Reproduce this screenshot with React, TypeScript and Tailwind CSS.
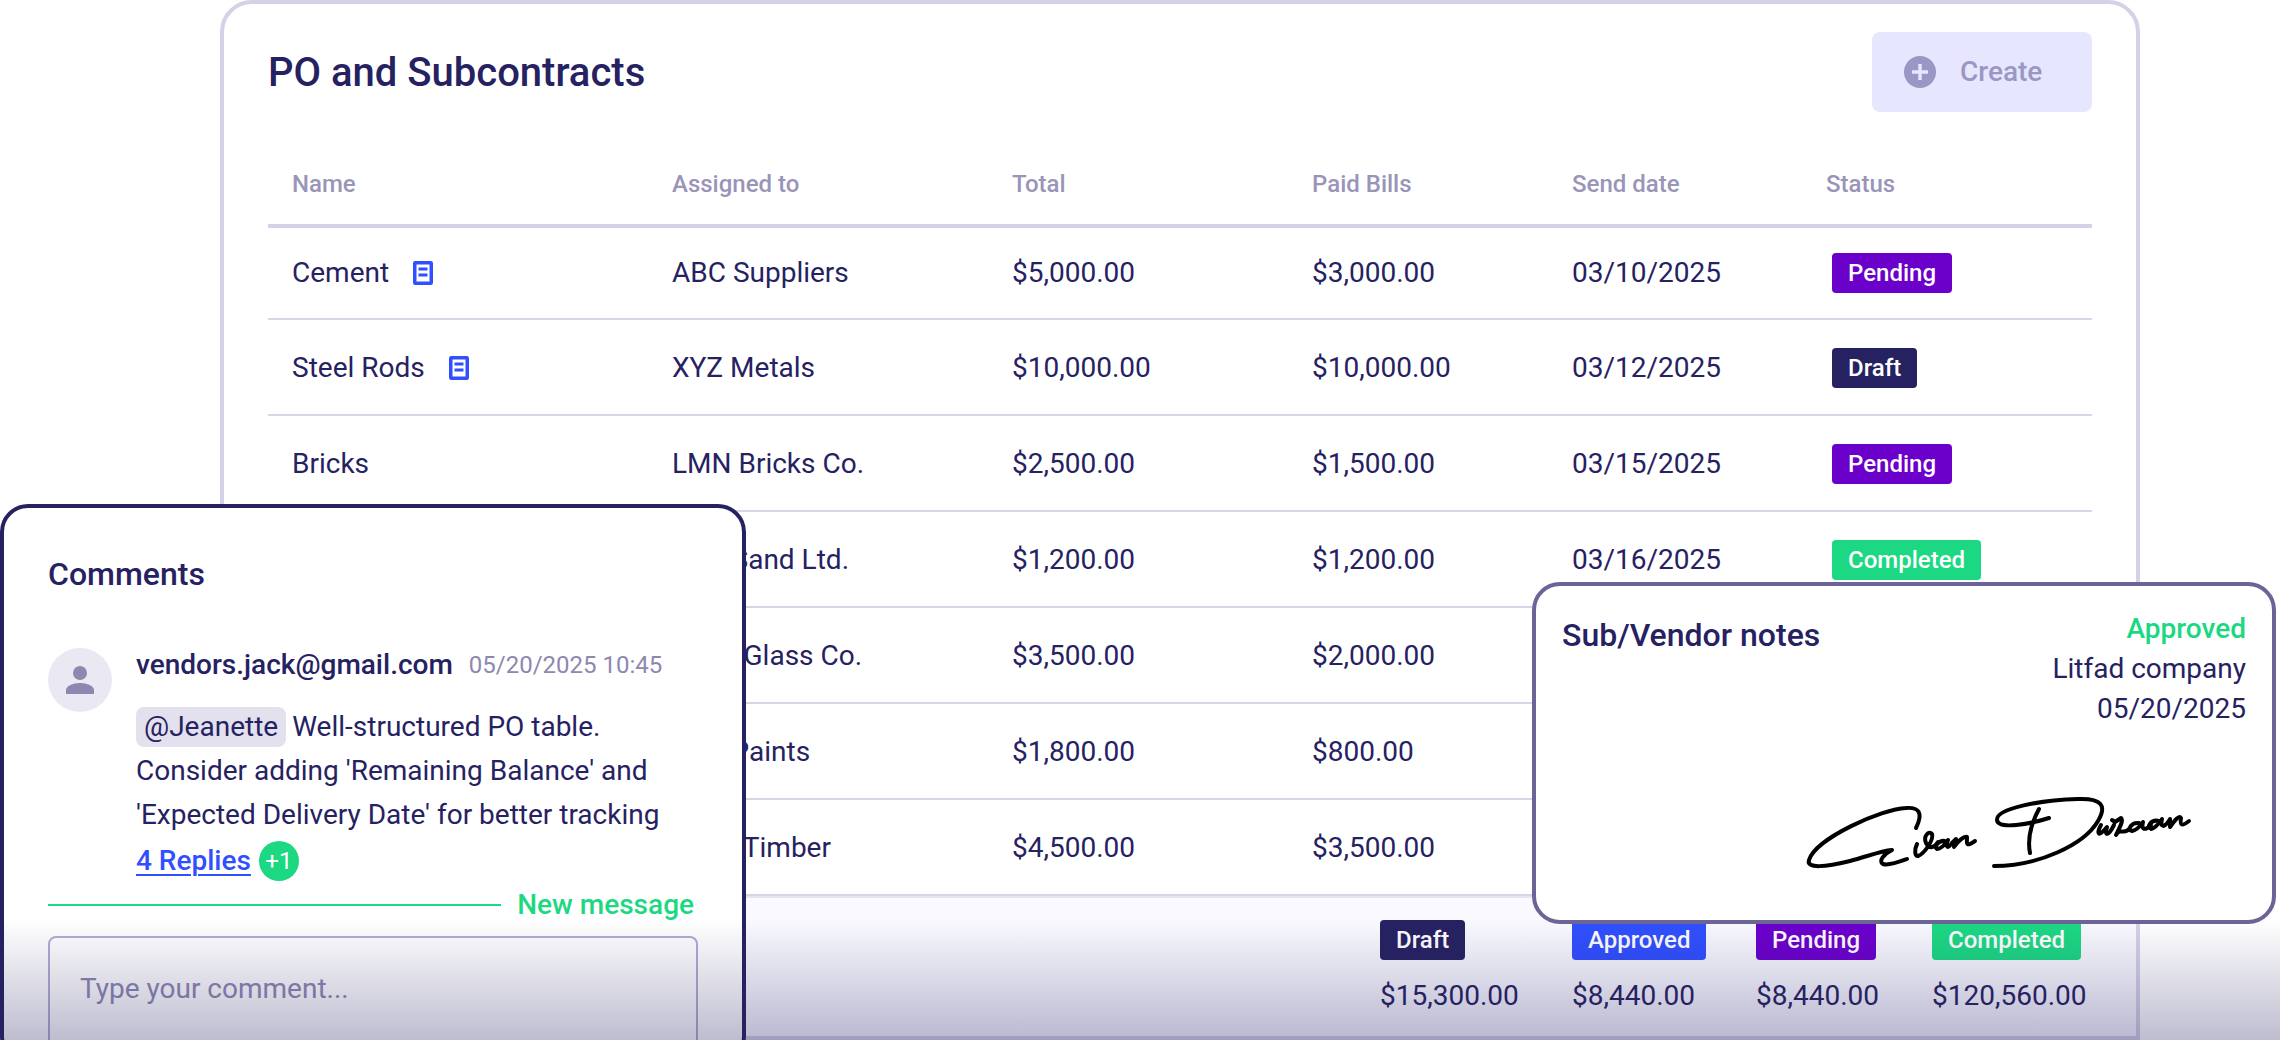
import React from 'react';

type Status = 'Pending' | 'Draft' | 'Completed' | 'Approved';

interface Row {
  name?: string;
  hasNote?: boolean;
  assignedTo: string;
  total: string;
  paid: string;
  date?: string;
  status?: Status;
}

const rows: Row[] = [
  { name: 'Cement', hasNote: true, assignedTo: 'ABC Suppliers', total: '$5,000.00', paid: '$3,000.00', date: '03/10/2025', status: 'Pending' },
  { name: 'Steel Rods', hasNote: true, assignedTo: 'XYZ Metals', total: '$10,000.00', paid: '$10,000.00', date: '03/12/2025', status: 'Draft' },
  { name: 'Bricks', assignedTo: 'LMN Bricks Co.', total: '$2,500.00', paid: '$1,500.00', date: '03/15/2025', status: 'Pending' },
  { assignedTo: 'Fine Sand Ltd.', total: '$1,200.00', paid: '$1,200.00', date: '03/16/2025', status: 'Completed' },
  { assignedTo: 'Clear Glass Co.', total: '$3,500.00', paid: '$2,000.00' },
  { assignedTo: 'Fine Paints', total: '$1,800.00', paid: '$800.00' },
  { assignedTo: 'Delta Timber', total: '$4,500.00', paid: '$3,500.00' },
];

const totals: { status: Status; amount: string }[] = [
  { status: 'Draft', amount: '$15,300.00' },
  { status: 'Approved', amount: '$8,440.00' },
  { status: 'Pending', amount: '$8,440.00' },
  { status: 'Completed', amount: '$120,560.00' },
];

const statusColors: Record<Status, string> = {
  Pending: 'bg-[#6b00cb]',
  Draft: 'bg-[#262262]',
  Completed: 'bg-[#1cd882]',
  Approved: 'bg-[#304ffe]',
};

const Badge: React.FC<{ status: Status }> = ({ status }) => (
  <span className={`inline-flex h-10 items-center rounded px-4 text-2xl font-medium text-white ${statusColors[status]}`}>
    {status}
  </span>
);

const NoteIcon: React.FC = () => (
  <svg width="20" height="24" viewBox="0 0 20 24" fill="none" className="shrink-0 text-[#304ffe]">
    <rect x="1.75" y="1.75" width="16.5" height="20.5" rx="0.5" stroke="currentColor" strokeWidth="3.5" />
    <path d="M5.5 8h9M5.5 14h9" stroke="currentColor" strokeWidth="2.8" />
  </svg>
);

const PlusIcon: React.FC = () => (
  <svg width="32" height="32" viewBox="0 0 32 32" className="shrink-0">
    <circle cx="16" cy="16" r="16" fill="#9a97c4" />
    <path d="M16 8v16M8 16h16" stroke="#e6e6fe" strokeWidth="3.4" />
  </svg>
);

const Signature: React.FC = () => (
  <svg viewBox="0 0 440 120" className="h-[120px] w-[440px]" fill="none" stroke="#000" strokeWidth="4" strokeLinecap="round" strokeLinejoin="round">
    <path d="M136 58C144 42 138 37 126 38C102 39 36 68 29 90C26 99 46 97 70 91C86 87 100 81 112 80C104 84 98 91 103 94C109 96 119 92 127 89" />
    <path d="M137 74C134 80 135 87 138 86C144 84 154 70 152 64C149 60 143 66 146 73C149 80 155 77 158 72M165 71C159 70 153 77 157 79C162 79 166 73 168 70C165 78 168 79 172 73L176 69L174 77C178 71 184 66 187 67C187 73 185 78 195 71" />
    <path d="M259 39C252 52 247 68 250 83M269 48C250 54 218 60 217 50C216 38 262 30 298 29C322 28 327 36 318 51C304 75 258 96 214 96" />
    <path d="M321 55C316 64 318 68 327 57C324 66 328 67 334 55M332 50L335 52L341 48C344 51 339 58 336 65C341 57 344 66 350 58M359 53C351 52 347 60 352 61C357 60 361 55 363 52C361 60 365 61 371 55M379 51C371 49 366 57 371 59C376 58 380 52 382 49C380 57 384 58 388 52L390 49L390 57C395 50 399 45 401 48C400 55 401 57 409 51" />
  </svg>
);

const Comments: React.FC = () => (
  <section className="absolute top-[504px] left-0 h-[560px] w-[746px] rounded-[28px] border-4 border-[#262262] bg-white px-11 pt-[46px]">
    <h2 className="text-[32px] leading-10 font-medium">Comments</h2>
    <div className="mt-[50px] flex gap-6">
      <div className="mt-1 flex size-16 shrink-0 items-center justify-center rounded-full bg-[#eae8f2]">
        <svg width="28" height="28" viewBox="0 0 28 28" fill="#8d88b0">
          <circle cx="14" cy="7" r="7" />
          <path d="M0 28v-4c0-4 7-7 14-7s14 3 14 7v4z" />
        </svg>
      </div>
      <div className="min-w-0 whitespace-nowrap">
        <div className="flex items-center gap-4 pt-px">
          <span className="text-[28px] leading-10 font-medium">vendors.jack@gmail.com</span>
          <time className="text-2xl text-[#8d88b0]">05/20/2025 10:45</time>
        </div>
        <p className="mt-5 text-[28px] leading-11">
          <span className="mr-1.5 inline-block rounded-lg bg-[#e4e1ef] px-2 leading-10">@Jeanette</span>
          Well-structured PO table.
          <br />
          Consider adding 'Remaining Balance' and
          <br />
          'Expected Delivery Date' for better tracking
        </p>
        <div className="mt-1 flex items-center gap-2">
          <a href="#replies" className="text-[28px] leading-10 font-medium text-[#304ffe] underline decoration-2 underline-offset-4">
            4 Replies
          </a>
          <span className="flex size-10 items-center justify-center rounded-full bg-[#1cd882] text-2xl text-white">+1</span>
        </div>
      </div>
    </div>
    <div className="flex h-12 items-center gap-4 pr-1">
      <div className="h-0.5 grow bg-[#1cd882]" />
      <span className="text-[28px] font-medium text-[#1cd882]">New message</span>
    </div>
    <textarea
      aria-label="Your comment"
      placeholder="Type your comment..."
      className="mt-[7px] block h-32 w-full resize-none rounded-lg border-2 border-[#b3abd3] px-[30px] py-[31px] text-[28px] leading-10 outline-none placeholder:text-[#8d88b0]"
    />
  </section>
);

const VendorNotes: React.FC = () => (
  <section className="absolute top-[582px] right-1 flex h-[342px] w-[744px] flex-col justify-between rounded-[28px] border-4 border-[#6b6496] bg-white px-[26px] pt-[23px]">
    <div className="flex items-start justify-between">
      <h2 className="pt-1.5 text-[32px] leading-10 font-medium">Sub/Vendor notes</h2>
      <div className="text-right text-[28px] leading-10">
        <p className="font-medium text-[#1cd882]">Approved</p>
        <p>Litfad company</p>
        <p>05/20/2025</p>
      </div>
    </div>
    <div className="mr-[26px] mb-[30px] self-end">
      <Signature />
    </div>
  </section>
);

export default function App() {
  return (
    <div className="relative overflow-hidden bg-white font-[Roboto,sans-serif] text-[#262262]">
      <main className="mr-[140px] ml-[220px] rounded-t-[32px] border-4 border-[#d5d1e6] px-11 pt-7">
        <header className="flex items-center justify-between">
          <h1 className="pt-0.5 text-[40px] leading-12 font-medium">PO and Subcontracts</h1>
          <button type="button" className="flex h-20 w-[220px] items-center gap-6 rounded-lg bg-[#e6e6fe] pl-8 text-[28px] font-medium text-[#9a97c4]">
            <PlusIcon />
            Create
          </button>
        </header>

        <table className="mt-8 w-full table-fixed border-separate border-spacing-0 text-left text-[28px]">
          <thead>
            <tr className="h-[84px] text-2xl text-[#9a95b8] *:border-b-4 *:border-[#d5d1e6] *:px-6 *:font-medium">
              <th className="w-[380px]">Name</th>
              <th className="w-[340px]">Assigned to</th>
              <th className="w-[300px]">Total</th>
              <th className="w-[260px]">Paid Bills</th>
              <th className="w-[254px]">Send date</th>
              <th>Status</th>
            </tr>
          </thead>
          <tbody>
            {rows.map((row, i) => (
              <tr
                key={row.assignedTo}
                className={`*:border-b-2 *:border-[#d8d5e9] *:px-6 ${i === 0 ? 'h-[92px]' : 'h-24 *:pt-0.5'}`}
              >
                <td>
                  <div className="flex items-center gap-6">
                    {row.name}
                    {row.hasNote && <NoteIcon />}
                  </div>
                </td>
                <td>{row.assignedTo}</td>
                <td>{row.total}</td>
                <td>{row.paid}</td>
                <td>{row.date}</td>
                <td>
                  {row.status && (
                    <div className="flex pl-1.5">
                      <Badge status={row.status} />
                    </div>
                  )}
                </td>
              </tr>
            ))}
          </tbody>
        </table>

        <footer className="-mx-11 grid grid-cols-[144px_136px_128px_160px] justify-end gap-12 border-t-2 border-[#e6e4ef] bg-[#f9f9ff] px-11 pt-[22px] pb-5">
          {totals.map((item) => (
            <div key={item.status} className="flex flex-col items-start gap-4">
              <Badge status={item.status} />
              <span className="text-[28px] leading-10">{item.amount}</span>
            </div>
          ))}
        </footer>
      </main>

      <Comments />
      <div className="pointer-events-none absolute inset-x-0 bottom-0 h-[120px] bg-linear-to-b from-[#262262]/0 to-[#262262]/30" />
      <VendorNotes />
    </div>
  );
}
